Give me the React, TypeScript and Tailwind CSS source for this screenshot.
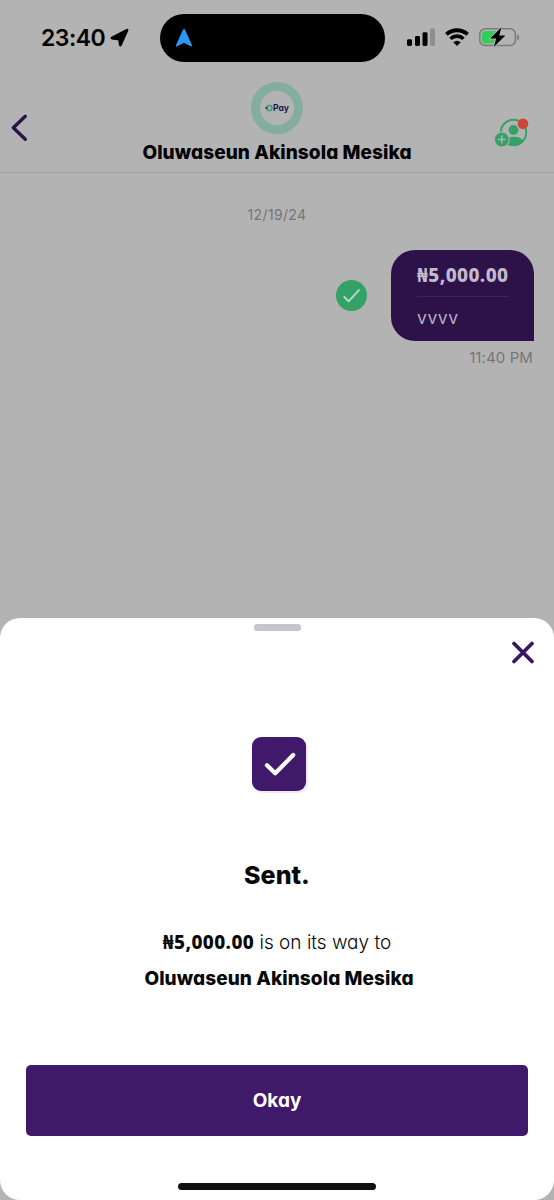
import React from 'react';

const brandFont = "font-['Inter','Noto_Sans',sans-serif] [font-feature-settings:'cv11'] whitespace-nowrap";
const amountFont = "font-['Noto_Sans',sans-serif] whitespace-nowrap text-[19px] font-extrabold tracking-[0.4px]";

function StatusBar() {
  return (
    <div className="flex h-[62px] items-start">
      <div className="flex w-[160px] items-center pl-[41px] pt-[20px]">
        <span className="w-[65px] whitespace-nowrap font-['Inter',sans-serif] text-[23px] font-semibold leading-[36px] tracking-[-0.5px] text-black">
          23:40
        </span>
        <svg className="ml-[4px] h-[20px] w-[20px]" viewBox="0 0 20 20">
          <path d="M2 10 17 2.2 10.4 17 9.6 11.2Z" fill="#000" stroke="#000" strokeWidth="2.8" strokeLinejoin="round" />
        </svg>
      </div>
      <div className="mt-[14px] flex h-[48px] w-[225px] items-center rounded-full bg-black pl-[15px]">
        <svg className="mb-[1px] h-[20px] w-[18px]" viewBox="0 0 18 20">
          <path d="M9 2 16 17.4 9 13.6 2 17.4Z" fill="#2f96f8" stroke="#2f96f8" strokeWidth="2" strokeLinejoin="round" />
        </svg>
      </div>
      <svg className="ml-[21px] mt-[26px] h-[22px] w-[114px]" viewBox="406 26 114 22">
        <rect x="407" y="39.2" width="5" height="6.8" rx="1.4" />
        <rect x="415" y="36" width="5" height="10" rx="1.4" />
        <rect x="422.5" y="32.2" width="5" height="13.8" rx="1.4" />
        <rect x="430" y="28.5" width="5" height="17.5" rx="1.4" fill="#8e8e8e" />
        <g fill="none" stroke="#000">
          <path d="M446.4 34.4a15.6 15.6 0 0 1 21.2 0" strokeWidth="3.8" />
          <path d="M450.5 38.7a9.6 9.6 0 0 1 13 0" strokeWidth="3.6" />
        </g>
        <path d="M453.2 42.3a5.8 5.8 0 0 1 7.6 0L457 46Z" />
        <rect x="479.8" y="28.8" width="35.6" height="16.8" rx="5.4" fill="none" stroke="#7b7b7b" strokeWidth="1.5" />
        <path d="M485.5 31h10.5v12.6h-10.5a3.6 3.6 0 0 1-3.6-3.6v-5.4a3.6 3.6 0 0 1 3.6-3.6Z" fill="#32cf58" />
        <path d="M517.2 34.2c2.6 1 2.6 5.2 0 6.2Z" fill="#7b7b7b" />
        <path d="M501.5 27.2 490.2 38.6h6L493.8 47 505.4 35.4h-6.2Z" fill="#000" stroke="#b3b3b3" strokeWidth="2" paintOrder="stroke" strokeLinejoin="round" />
      </svg>
    </div>
  );
}

function ChatHeader() {
  return (
    <header className="grid h-[111px] grid-cols-[80px_1fr_80px] items-start border-b border-[#a5a5a5]">
      <svg className="ml-[8px] mt-[50px] h-[32px] w-[24px]" viewBox="8 112 24 32">
        <path d="M25.3 116.3 13.3 127.7 25.3 139.3" fill="none" stroke="#2d1149" strokeWidth="3.4" strokeLinecap="round" strokeLinejoin="round" />
      </svg>
      <div className="flex flex-col items-center pt-[20px]">
        <div className="flex h-[52px] w-[52px] items-center justify-center rounded-full border-[9px] border-[#85ad9f]">
          <svg className="h-[8px] w-[8px] shrink-0" viewBox="0 0 8 8">
            <circle cx="4.4" cy="4" r="2.6" fill="none" stroke="#2b9f80" strokeWidth="1.5" />
            <path d="M.4 4h2" stroke="#20134d" strokeWidth="1.5" />
          </svg>
          <span className={`${brandFont} text-[8.5px] font-bold leading-[10px] text-[#20134d]`}>Pay</span>
        </div>
        <h1 className={`${brandFont} mt-[6px] text-[19px] font-extrabold leading-[26px] tracking-[0.08px] text-black`}>
          Oluwaseun Akinsola Mesika
        </h1>
      </div>
      <svg className="mr-[24px] mt-[52px] h-[36px] w-[36px] justify-self-end" viewBox="494 114 36 36">
        <circle cx="513.5" cy="132.5" r="12.7" fill="none" stroke="#34a166" strokeWidth="1.9" />
        <circle cx="513.5" cy="130" r="4.9" fill="#34a166" />
        <path d="M504.5 142.8c.8-4 3.6-6 9-6 5.2 0 8.2 1.4 9.6 4.3-2.5 3.3-6 4.9-9.7 4.9-3.4 0-6.5-1-8.9-3.2Z" fill="#34a166" />
        <circle cx="501.8" cy="139.5" r="8" fill="#b3b3b3" />
        <circle cx="501.8" cy="139.5" r="6.9" fill="#34a166" />
        <path d="M497.9 139.5h7.8M501.8 135.6v7.8" stroke="#b3b3b3" strokeWidth="1.4" />
        <circle cx="523" cy="123.7" r="5.3" fill="#cf4439" />
      </svg>
    </header>
  );
}

function Conversation() {
  return (
    <main className="flex h-[445px] flex-col px-[20px] pt-[33px]">
      <time className="self-center whitespace-nowrap font-['Inter',sans-serif] text-[14px] leading-[18px] tracking-[0.35px] text-[#75757a]">12/19/24</time>
      <div className="mt-[26px] flex items-center justify-end">
        <svg className="mr-[24px] h-[31px] w-[31px]" viewBox="0 0 31 31">
          <circle cx="15.5" cy="15.5" r="15.5" fill="#34a166" />
          <path d="m8.2 16.8 4.4 4.6L23 10" fill="none" stroke="#c3dbcd" strokeWidth="1.8" strokeLinecap="round" strokeLinejoin="round" />
        </svg>
        <div className="h-[91px] w-[143px] rounded-[24px] rounded-br-none bg-[#2d1149] pl-[26px] pr-[25px] pt-[12px]">
          <p className={`${amountFont} leading-[26px] text-[#c3b9ce]`}>₦5,000.00</p>
          <div className="mt-[8px] h-px bg-[#3d2458]" />
          <p className={`${brandFont} mt-[9px] text-[17.5px] leading-[24px] tracking-[0.6px] text-[#b7acc2]`}>vvvv</p>
        </div>
      </div>
      <time className="mr-[1px] mt-[7px] self-end whitespace-nowrap font-['Inter',sans-serif] text-[15px] leading-[20px] tracking-[0.1px] text-[#75757a]">11:40 PM</time>
    </main>
  );
}

function SentSheet() {
  return (
    <section className="flex h-[582px] flex-col items-center rounded-[20px] bg-white pt-[6px]">
      <div className="h-[7px] w-[47px] rounded-[3px] bg-[#c6c5ce]" />
      <button className="mr-[19px] mt-[8px] self-end" aria-label="Close">
        <svg className="block h-[26px] w-[26px]" viewBox="0 0 26 26">
          <path d="m5 4.5 18 18m0-18-18 18" stroke="#381760" strokeWidth="3.8" strokeLinecap="round" />
        </svg>
      </button>
      <div className="ml-[4px] mt-[72px] flex h-[54px] w-[54px] shrink-0 items-center justify-center rounded-[9px] bg-[#41196a] shadow-[2px_2px_1px_#f2e6fa]">
        <svg className="h-[54px] w-[54px]" viewBox="0 0 54 54">
          <path d="m15 28.2 8.2 8.1L41.2 18" fill="none" stroke="#fff" strokeWidth="4.2" strokeLinecap="round" strokeLinejoin="round" />
        </svg>
      </div>
      <h2 className={`${brandFont} mt-[67px] text-[25px] font-extrabold leading-[34px] text-[#080808]`}>Sent.</h2>
      <div className={`${brandFont} mt-[32px] flex flex-col items-center text-[19px] leading-[36px] text-[#080808]`}>
        <p className="h-[37px] font-light">
          <strong className={amountFont}>₦5,000.00</strong> is on its way to
        </p>
        <p className="ml-[4px] h-[36px] font-extrabold tracking-[0.08px]">Oluwaseun Akinsola Mesika</p>
      </div>
      <button className={`${brandFont} mt-[68px] h-[71px] w-[502px] shrink-0 rounded-[5px] bg-[#41196a] text-[19px] font-bold leading-[26px] text-white`}>
        Okay
      </button>
      <div className="mt-[47px] h-[7px] w-[198px] shrink-0 rounded-full bg-[#111]" />
    </section>
  );
}

export default function App() {
  return (
    <div className="h-[1200px] w-[554px] overflow-hidden bg-[#b3b3b3]">
      <StatusBar />
      <ChatHeader />
      <Conversation />
      <SentSheet />
    </div>
  );
}
